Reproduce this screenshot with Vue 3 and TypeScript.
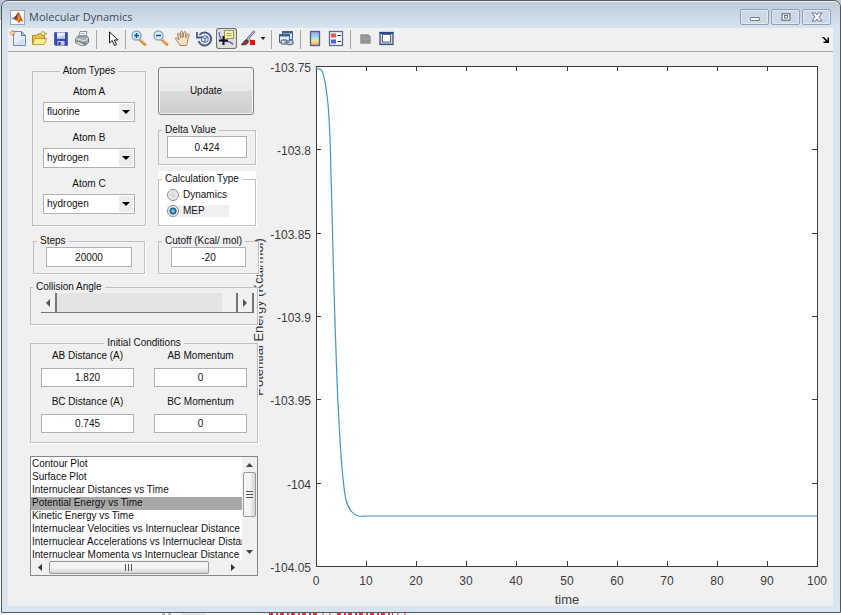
<script setup lang="ts">
import { computed, ref } from 'vue'

interface AtomField {
  id: string
  label: string
  value: string
}

interface ConditionField {
  id: string
  label: string
  value: string
}

const elements = ['hydrogen', 'fluorine', 'chlorine', 'deuterium']

const atoms = ref<AtomField[]>([
  { id: 'atom-a', label: 'Atom A', value: 'fluorine' },
  { id: 'atom-b', label: 'Atom B', value: 'hydrogen' },
  { id: 'atom-c', label: 'Atom C', value: 'hydrogen' },
])

const conditions = ref<ConditionField[]>([
  { id: 'ab-distance', label: 'AB Distance (A)', value: '1.820' },
  { id: 'ab-momentum', label: 'AB Momentum', value: '0' },
  { id: 'bc-distance', label: 'BC Distance (A)', value: '0.745' },
  { id: 'bc-momentum', label: 'BC Momentum', value: '0' },
])

const delta = ref('0.424')
const steps = ref('20000')
const cutoff = ref('-20')
const calcType = ref('MEP')
const angle = ref(180)

const plots = [
  'Contour Plot',
  'Surface Plot',
  'Internuclear Distances vs Time',
  'Potential Energy vs Time',
  'Kinetic Energy vs Time',
  'Internuclear Velocities vs Internuclear Distance',
  'Internuclear Accelerations vs Internuclear Distance',
  'Internuclear Momenta vs Internuclear Distance',
]
const selectedPlot = ref('Potential Energy vs Time')

// Plot box in chart units
const box = { left: 316, top: 66, right: 817, bottom: 566 }

const xTicks = Array.from({ length: 11 }, (_, i) => ({
  label: String(i * 10),
  x: Math.round(box.left + ((box.right - box.left) * i) / 10),
}))

const yTicks = ['-103.75', '-103.8', '-103.85', '-103.9', '-103.95', '-104', '-104.05'].map((label, i) => ({
  label,
  y: Math.round(box.top + ((box.bottom - box.top) * i) / 6),
}))

const samples: [number, number][] = [
  [316, 69], [319, 69], [322, 71], [325, 82], [328, 104], [330, 138], [331, 175], [332, 210],
  [334, 290], [337, 380], [339, 422], [342, 468], [346, 500], [352, 512], [358, 516], [366, 516],
]

// Catmull-Rom interpolation through the samples
const curve = computed(() => {
  let d = `M${samples[0][0]} ${samples[0][1]}`
  for (let i = 0; i < samples.length - 1; i++) {
    const p0 = samples[Math.max(i - 1, 0)]
    const p1 = samples[i]
    const p2 = samples[i + 1]
    const p3 = samples[Math.min(i + 2, samples.length - 1)]
    d += ` C${p1[0] + (p2[0] - p0[0]) / 6} ${p1[1] + (p2[1] - p0[1]) / 6}`
    d += ` ${p2[0] - (p3[0] - p1[0]) / 6} ${p2[1] - (p3[1] - p1[1]) / 6} ${p2[0]} ${p2[1]}`
  }
  return `${d} L${box.right} 516`
})

function nudge(amount: number) {
  angle.value = Math.min(180, Math.max(0, Number(angle.value) + amount))
}
</script>

<template>
  <div class="desktop">
    <div class="window">
      <header class="titlebar">
        <svg class="app-icon" width="15" height="15" viewBox="0 0 15 15" aria-hidden="true">
          <rect x=".5" y=".5" width="14" height="14" fill="#f4f6f8" stroke="#98a5b3" />
          <path d="M1.5 8.5 5 6.500 7 8 5 10z" fill="#4c86b8" />
          <path d="M5 6.500C6.500 5.500 7.500 2 8.500 2L7 9.500 5 10z" fill="#7c3026" />
          <path d="M8.500 2C10 3 11.500 9 13.500 11.500 11.500 10.500 10.500 10.500 8.500 13 8 11 6.500 10 5 10 7 9 7.500 4 8.500 2z" fill="#d9581c" />
          <path d="M8.700 4C9.500 6 9.800 8 9.500 10.500L8 11z" fill="#f5a23c" />
        </svg>
        <h1>Molecular Dynamics</h1>
        <div class="window-buttons">
          <button type="button" aria-label="Minimize">
            <svg width="14" height="12" viewBox="0 0 14 12"><rect x="2.500" y="6.500" width="9" height="3" rx=".5" fill="#fff" stroke="#737c87" /></svg>
          </button>
          <button type="button" aria-label="Maximize">
            <svg width="14" height="12" viewBox="0 0 14 12"><rect x="3" y="2.500" width="8" height="7" fill="#fff" stroke="#737c87" /><rect x="3.500" y="3" width="7" height="6" fill="none" stroke="#8c959f" /><rect x="5.500" y="4.500" width="3" height="2.500" fill="#fff" stroke="#69727d" /></svg>
          </button>
          <button type="button" aria-label="Close">
            <svg width="14" height="12" viewBox="0 0 14 12"><path d="M2 2h3.500L7 4 8.500 2H12L8.900 6 12 10H8.500L7 8 5.500 10H2l3.100-4z" fill="#fff" stroke="#6b747f" /></svg>
          </button>
        </div>
      </header>

      <div class="client">
        <div class="toolbar" role="toolbar" aria-label="Figure tools">
          <div class="group">
            <button type="button" aria-label="New figure">
              <svg viewBox="0 0 21 21"><path d="M5.500 3.500h8l4 4v10h-12z" fill="#e6f0fb" stroke="#7187b0" /><path d="M13.500 3.500v4h4z" fill="#b5cbe8" stroke="#6079a8" /><path d="M7 16.500 16.500 9v7.500z" fill="#cfe1f5" /><path d="M4.500 2v6M1.500 5h6M2.500 3l4 4M6.500 3l-4 4" stroke="#e07a4a" /><circle cx="4.500" cy="5" r="1.300" fill="#ffe6b0" /></svg>
            </button>
            <button type="button" aria-label="Open">
              <svg viewBox="0 0 21 21"><path d="M3.500 16.500v-9h4l1-1.500h4l1 1.500h2v3" fill="#e9c24d" stroke="#b58a26" /><path d="M3.500 16.500l2.500-6h11.500l-2.500 6z" fill="#fff09a" stroke="#c79c30" /><path d="M11 5.500C13 3 16 3 16.500 6M15 5l1.500 2 1.500-2" fill="none" stroke="#d5a732" /></svg>
            </button>
            <button type="button" aria-label="Save">
              <svg viewBox="0 0 21 21"><path d="M4.500 4.500h13v13h-12l-1-1z" fill="#3c49b0" stroke="#5964b5" /><path d="M7 4.500h8v6H7z" fill="#edf1fc" /><path d="M7 9l8-2v3.500H7z" fill="#bccdf2" /><path d="M7.500 13h7v4.500h-7z" fill="#c5cada" /><path d="M8.500 14h2v3h-2z" fill="#27307b" /></svg>
            </button>
            <button type="button" aria-label="Print">
              <svg viewBox="0 0 21 21"><path d="M7.500 9 9 3.500h7L14.500 9" fill="#f2f6fa" stroke="#8993a0" /><path d="M9.500 5.500h4.500M9 7.500h4.500" stroke="#a8b5c4" /><path d="M4.500 10.500 7.500 8h8l2 1.500v5L14 17.500 4.500 14z" fill="#a7adb2" stroke="#6e757b" /><path d="M4.500 10.500 14 13l3.500-3.500" fill="none" stroke="#e0e3e5" /><path d="M6 13l7 2.500M14 13.500v3" stroke="#555c62" /><path d="M4 14.500l3-1 6 2.500-2 2z" fill="#e6e8ea" stroke="#82898f" /></svg>
            </button>
          </div>
          <i class="sep"></i>
          <button type="button" aria-label="Edit plot">
            <svg viewBox="0 0 21 21"><path d="M8.500 4v11l2.700-2.500L13.500 17.500l2-1-2.200-4.500H17z" fill="#fff" stroke="#161616" stroke-linejoin="round" /></svg>
          </button>
          <i class="sep tight"></i>
          <div class="group spaced">
            <button type="button" aria-label="Zoom in">
              <svg viewBox="0 0 21 21"><path d="M11.500 11.500l5.500 5" stroke="#d49344" stroke-width="3" stroke-linecap="round" /><path d="M12 11l5 4.500" stroke="#f6c574" /><circle cx="8.500" cy="7.500" r="4.500" fill="#d4efff" stroke="#8babc9" stroke-width="1.500" /><path d="M6 7.500h5M8.500 5v5" stroke="#27518d" stroke-width="1.600" /></svg>
            </button>
            <button type="button" aria-label="Zoom out">
              <svg viewBox="0 0 21 21"><path d="M11.500 11.500l5.500 5" stroke="#d49344" stroke-width="3" stroke-linecap="round" /><path d="M12 11l5 4.500" stroke="#f6c574" /><circle cx="8.500" cy="7.500" r="4.500" fill="#d4efff" stroke="#8babc9" stroke-width="1.500" /><path d="M6 7.500h5" stroke="#27518d" stroke-width="1.600" /></svg>
            </button>
            <button type="button" aria-label="Pan">
              <svg viewBox="0 0 21 21"><path d="M8 17.500C7 14.500 3.500 12 3.500 10c1-1 2.500.5 3.500 2L5.500 6c.5-1.500 1.700-.8 2 .3L9 10 8.500 4c.7-1.300 1.900-1 2 .3L11 9.500l1-5.300c.8-1.200 2-.6 2 .6l-.5 5.200 1.700-3.700c.9-.9 2-.2 1.800 1L15.500 13c0 2-.7 3-1 4.500z" fill="#fbe0c3" stroke="#99755e" stroke-width=".9" /></svg>
            </button>
            <button type="button" aria-label="Rotate 3D">
              <svg viewBox="0 0 21 21"><path d="M5.500 7A6.500 6.500 0 1 1 4.500 13" fill="none" stroke="#4c5f86" stroke-width="2" /><path d="M3 4v5.500h5.500" fill="none" stroke="#4c5f86" stroke-width="1.800" /><path d="M7.500 9 11 7.500 14 9v4l-3 1.500L7.500 13z" fill="#dce6f5" stroke="#526894" /><path d="M7.500 9l3.500 1.500L14 9M11 10.500v4" fill="none" stroke="#526894" /></svg>
            </button>
            <button type="button" class="pressed" aria-label="Data cursor" aria-pressed="true">
              <svg viewBox="0 0 21 21"><path d="M3 4c.5 5 2 8 5 9s7 0 9 3.500" fill="none" stroke="#6762da" stroke-width="1.400" /><path d="M8.500 2.500h9v8h-7l-2 2z" fill="#f5efa4" stroke="#9b935f" /><path d="M10.500 5.500h5M10.500 7.500h5" stroke="#a6a171" /><path d="M3 12.500h9M7.500 8v9" stroke="#111" stroke-width="2" /></svg>
            </button>
            <button type="button" aria-label="Brush">
              <svg viewBox="0 0 21 21"><path d="M16.500 3 9.500 11" stroke="#6866ae" stroke-width="2.600" /><path d="M16.500 3 10 10" stroke="#d1d3ec" /><path d="M10.500 9.500l2 2-2 2-2.500-2z" fill="#b9b9b9" stroke="#777" stroke-width=".6" /><path d="M9 11.500C6 11.500 6 15 3 16.500c3 1.200 7 0 7.500-3z" fill="#813a38" stroke="#472224" stroke-width=".7" /><path d="M12 12h5v5h-5z" fill="#f00c0c" /></svg>
            </button>
          </div>
          <button type="button" class="caret" aria-label="Brush colors">
            <svg viewBox="0 0 8 21"><path d="M1.500 9h5L4 12z" fill="#222" /></svg>
          </button>
          <i class="sep"></i>
          <button type="button" aria-label="Link plot">
            <svg viewBox="0 0 21 21"><path d="M6.500 3.500h10v8h-10z" fill="#dce8f8" stroke="#415c91" /><path d="M6 4.500h11" stroke="#415c91" stroke-width="2" /><path d="M3.500 6.500h10v8h-10z" fill="#e7effa" stroke="#415c91" /><path d="M3 7.500h11" stroke="#415c91" stroke-width="2" /><g fill="none" stroke="#6f8195" stroke-width="1.500"><rect x="5" y="12" width="6.500" height="4" rx="2" fill="#d9e3ec" /><rect x="10.500" y="12.500" width="6.500" height="4" rx="2" fill="#d9e3ec" /><path d="M8.500 14.300h5" /></g></svg>
          </button>
          <i class="sep tight"></i>
          <div class="group inset">
            <button type="button" aria-label="Insert colorbar">
              <svg viewBox="0 0 21 21"><defs><linearGradient id="jet" x1="0" y1="0" x2="0" y2="1"><stop offset="0" stop-color="#a69bea" /><stop offset=".35" stop-color="#8edbf0" /><stop offset=".65" stop-color="#e9ed8f" /><stop offset="1" stop-color="#f2a06b" /></linearGradient></defs><rect x="6.500" y="3.500" width="9" height="14" fill="url(#jet)" stroke="#4d6189" stroke-width="1.300" /></svg>
            </button>
            <button type="button" aria-label="Insert legend">
              <svg viewBox="0 0 21 21"><rect x="4.500" y="3.500" width="13" height="14" fill="#f5f8fc" stroke="#566a93" stroke-width="1.300" /><path d="M6 5.500h5v4H6z" fill="#ea5450" /><path d="M6 11.500h5v4H6z" fill="#5559e8" /><path d="M12.500 7.500H16M12.500 13.500H16" stroke="#333" /></svg>
            </button>
          </div>
          <i class="sep"></i>
          <div class="group">
            <button type="button" aria-label="Hide plot tools">
              <svg viewBox="0 0 21 21"><path d="M5.500 6.500h8l2 2v7h-10z" fill="#929292" stroke="#aaa" /><path d="M7 9h7M7 11.500h7" stroke="#a3a3a3" /></svg>
            </button>
            <button type="button" aria-label="Show plot tools">
              <svg viewBox="0 0 21 21"><rect x="4" y="4.500" width="13" height="12" fill="#d5d2c7" stroke="#39538b" stroke-width="1.300" /><path d="M3.500 5h14" stroke="#2d4986" stroke-width="2" /><rect x="6.500" y="6.500" width="8" height="7.500" fill="#fff" stroke="#526895" /><path d="M5 15.500h11" stroke="#989fa7" /></svg>
            </button>
          </div>
          <button type="button" class="dock" aria-label="Dock figure">
            <svg viewBox="0 0 14 21"><path d="M3 9h2l3.500 3.500V9.500H10V15H4.500v-1.500h2.500z" fill="#000" /></svg>
          </button>
        </div>

        <main class="figure">
          <form class="controls" @submit.prevent>
            <div class="settings">
              <fieldset class="atoms">
                <legend class="centered">Atom Types</legend>
                <div v-for="atom in atoms" :key="atom.id" class="atom">
                  <label :for="atom.id">{{ atom.label }}</label>
                  <span class="popup">
                    <select :id="atom.id" v-model="atom.value">
                      <option v-for="e in elements" :key="e">{{ e }}</option>
                    </select>
                    <svg width="14" height="16" viewBox="0 0 14 16" aria-hidden="true"><path d="M3 6h8l-4 4z" fill="#000" /></svg>
                  </span>
                </div>
              </fieldset>

              <div class="side">
                <button type="submit" class="update">Update</button>
                <fieldset class="single">
                  <legend><label for="delta">Delta Value</label></legend>
                  <input id="delta" v-model="delta" type="text" />
                </fieldset>
                <div class="calc">
                  <fieldset>
                    <legend>Calculation Type</legend>
                    <label class="radio"><input v-model="calcType" type="radio" name="calc" value="Dynamics" /><span>Dynamics</span></label>
                    <label class="radio shaded"><input v-model="calcType" type="radio" name="calc" value="MEP" /><span>MEP</span></label>
                  </fieldset>
                </div>
              </div>
            </div>

            <div class="pair">
              <fieldset class="single">
                <legend><label for="steps">Steps</label></legend>
                <input id="steps" v-model="steps" type="text" />
              </fieldset>
              <fieldset class="single">
                <legend><label for="cutoff">Cutoff (Kcal/ mol)</label></legend>
                <input id="cutoff" v-model="cutoff" type="text" />
              </fieldset>
            </div>

            <fieldset class="collision">
              <legend><label for="angle">Collision Angle</label></legend>
              <div class="slider">
                <button type="button" aria-label="Decrease angle" @click="nudge(-1)">
                  <svg width="6" height="8" viewBox="0 0 6 8"><path d="M5 0v8L1 4z" fill="#555" /></svg>
                </button>
                <input id="angle" v-model="angle" type="range" min="0" max="180" />
                <button type="button" aria-label="Increase angle" @click="nudge(1)">
                  <svg width="6" height="8" viewBox="0 0 6 8"><path d="M1 0v8l4-4z" fill="#555" /></svg>
                </button>
              </div>
            </fieldset>

            <fieldset class="initial">
              <legend class="centered">Initial Conditions</legend>
              <div class="conditions">
                <div v-for="c in conditions" :key="c.id" class="condition">
                  <label :for="c.id">{{ c.label }}</label>
                  <input :id="c.id" v-model="c.value" type="text" />
                </div>
              </div>
            </fieldset>

            <div class="listbox">
              <select v-model="selectedPlot" size="8" aria-label="Plot type">
                <option v-for="p in plots" :key="p">{{ p }}</option>
              </select>
              <div class="bar vertical" aria-hidden="true">
                <svg width="7" height="4" viewBox="0 0 7 4"><path d="M0 4h7L3.500 0z" fill="#444" /></svg>
                <i class="thumb"><b></b></i>
                <svg width="7" height="4" viewBox="0 0 7 4"><path d="M0 0h7L3.500 4z" fill="#444" /></svg>
              </div>
              <div class="bar horizontal" aria-hidden="true">
                <svg width="4" height="7" viewBox="0 0 4 7"><path d="M4 0v7L0 3.500z" fill="#333" /></svg>
                <i class="thumb"><b></b></i>
                <svg width="4" height="7" viewBox="0 0 4 7"><path d="M0 0v7l4-3.500z" fill="#333" /></svg>
              </div>
            </div>
          </form>

          <svg class="chart" viewBox="258 52 575 554" role="img" aria-label="Potential energy against time">
            <rect :x="box.left + 0.5" :y="box.top + 0.5" :width="box.right - box.left" :height="box.bottom - box.top" fill="#fff" stroke="#3c3c3c" />
            <g v-for="t in xTicks" :key="t.label">
              <path :d="`M${t.x + 0.5} ${box.bottom}v-5M${t.x + 0.5} ${box.top}v5`" stroke="#3c3c3c" />
              <text :x="t.x" y="585" text-anchor="middle">{{ t.label }}</text>
            </g>
            <g v-for="t in yTicks" :key="t.label">
              <path :d="`M${box.left} ${t.y + 0.5}h5M${box.right} ${t.y + 0.5}h-5`" stroke="#3c3c3c" />
              <text x="311" :y="t.y + 6" text-anchor="end">{{ t.label }}</text>
            </g>
            <path :d="curve" fill="none" stroke="#3f94d0" stroke-width="1.200" />
            <text class="axis-title" x="567" y="604" text-anchor="middle">time</text>
            <text class="axis-title" transform="translate(263 317) rotate(-90)" text-anchor="middle">Potential Energy (Kcal/mol)</text>
          </svg>
        </main>
      </div>
    </div>
    <svg class="behind" width="420" height="2" viewBox="0 0 420 2" aria-hidden="true">
      <path d="M268 1h50M336 1h56" stroke="#e33" stroke-width="2" stroke-dasharray="4 3 2 2" />
      <path d="M322 0v2M329 0v2M397 0v2M404 0v2" stroke="#e33" />
      <path d="M161 1h3M167 1h3" stroke="#888" />
      <path d="M180 0h24v2h-24z" fill="#e6e6e6" />
    </svg>
  </div>
</template>

<style>
body {
  margin: 0;
  background: #fafafa;
}
</style>

<style scoped>
* {
  box-sizing: border-box;
}

.desktop {
  padding-left: 1px;
  overflow: hidden;
  font: 10px/12px "Liberation Sans", Arial, sans-serif;
  color: #111;
  background: linear-gradient(#b9c6d3 0 20px, #fafafa 20px);
}

.behind {
  display: block;
}

.window {
  padding: 0 7px 6px 6px;
  border: 1px solid #55575c;
  border-radius: 7px 7px 0 0;
  background: linear-gradient(#bdcbd9, #d8e5f1 28px);
  box-shadow: inset 0 1px 0 #eef4f9;
}

.titlebar {
  display: flex;
  align-items: center;
  height: 27px;
  padding: 5px 2px 0;
}

.app-icon {
  margin-right: 4px;
}

h1 {
  flex: 1;
  margin: 0;
  font: 11px/16px "Open Sans", "Noto Sans", sans-serif;
  color: #3f4c5a;
}

.window-buttons {
  display: flex;
  gap: 2px;
}

.window-buttons button {
  display: grid;
  place-items: center;
  width: 29px;
  height: 16px;
  padding: 0;
  border: 1px solid #929fae;
  border-radius: 2px;
  background: #ccd9e6;
  box-shadow: inset 0 0 0 1px #e0e9f2;
}

.client {
  background: #f0f0f0;
}

.toolbar {
  display: flex;
  align-items: flex-start;
  height: 24px;
  border-bottom: 1px solid #a8a8a8;
}

.group {
  display: flex;
}

.spaced {
  gap: 1px;
}

.inset {
  padding-left: 1px;
}

.toolbar button {
  width: 21px;
  height: 21px;
  padding: 0;
  border: 0;
  background: none;
}

.toolbar svg {
  display: block;
  width: 100%;
  height: 21px;
}

.toolbar .pressed {
  border-radius: 3px;
  background: #dedede;
  box-shadow: inset 0 0 0 1px #707070;
}

.toolbar .caret {
  width: 8px;
}

.toolbar .dock {
  width: 14px;
  margin-left: auto;
}

.sep {
  width: 1px;
  height: 19px;
  margin: 2px 4px 0;
  background: #a6a6a6;
}

.sep.tight {
  margin: 2px 2px 0 3px;
}

.figure {
  display: flex;
  align-items: flex-start;
}

.controls {
  position: relative;
  z-index: 1;
  flex: none;
  width: 250px;
  padding: 13px 0 0 22px;
}

.settings {
  display: grid;
  grid-template-columns: 114px 98px;
  gap: 12px;
  padding-left: 2px;
}

fieldset {
  min-width: 0;
  margin: 0;
  padding: 0 8px 6px;
  border: 1px solid #c0c0c0;
  background: #f0f0f0;
  box-shadow: 1px 1px 0 #fff;
}

legend {
  margin-left: -5px;
  padding: 0 3px;
  background: #f0f0f0;
  white-space: nowrap;
}

legend.centered {
  margin: 0 auto;
}

.atoms {
  padding: 9px 10px 8px;
}

.atom {
  display: flex;
  flex-direction: column;
  align-items: center;
  gap: 4px;
}

.atom + .atom {
  margin-top: 10px;
}

.popup {
  display: grid;
  grid-template-columns: 1fr 16px;
  width: 92px;
}

.popup select {
  grid-area: 1 / 1 / 2 / 3;
  height: 20px;
  padding: 0 3px;
  border: 1px solid #adb0b6;
  border-radius: 0;
  appearance: none;
  background: #fff;
  color: inherit;
  font: inherit;
}

.popup svg {
  grid-area: 1 / 2;
  align-self: center;
  background: #ececec;
  pointer-events: none;
}

.side {
  display: flex;
  flex-direction: column;
  padding-top: 2px;
}

.update {
  height: 48px;
  margin: 0 2px 9px 0;
  border: 1px solid #808080;
  border-radius: 3px;
  background: linear-gradient(#f1f1f1, #e9e9e9 50%, #dadada 50%, #cecece);
  box-shadow: inset 0 0 0 1px #f6f6f6;
  color: inherit;
  font: inherit;
}

input[type="text"] {
  display: block;
  width: 100%;
  height: 20px;
  padding: 0;
  border: 1px solid #adb0b6;
  background: #fff;
  color: inherit;
  font: inherit;
  text-align: center;
}

.side .single input {
  height: 22px;
}

.calc {
  margin-top: 6px;
  padding-top: 2px;
  background: #fff;
}

.calc fieldset {
  padding-bottom: 4px;
  background: #fff;
}

.calc legend {
  background: #fff;
}

.radio {
  display: flex;
  align-items: center;
  gap: 4px;
  height: 12px;
  margin: 4px 0;
}

.radio.shaded {
  width: 62px;
  background: #f0f0f0;
}

.radio input {
  width: 12px;
  height: 12px;
  margin: 0;
  border: 1px solid #8e8f8f;
  border-radius: 50%;
  appearance: none;
  background: radial-gradient(#d5d5d5, #f4f4f4);
}

.radio input:checked {
  background: radial-gradient(circle, #5cc4ee 0 1px, #14507f 3px, #e6edf2 4px);
}

.pair {
  display: grid;
  grid-template-columns: 112px 101px;
  gap: 13px;
  margin-top: 9px;
  padding-left: 3px;
}

.pair .single {
  padding: 0 12px 6px;
}

.pair legend {
  margin-left: -9px;
}

.collision {
  margin-top: 7px;
  padding: 0 3px 11px 10px;
}

.collision legend {
  margin-left: -8px;
}

.slider {
  display: flex;
  height: 20px;
  border-bottom: 1px solid #767676;
}

.slider button {
  display: grid;
  place-items: center;
  width: 16px;
  padding: 0;
  border: 0;
  border-right: 2px solid #767676;
  background: #f0f0f0;
}

.slider input {
  flex: 1;
  min-width: 0;
  margin: 0;
  appearance: none;
  background: #e4e4e4;
}

.slider input::-webkit-slider-thumb {
  width: 16px;
  height: 19px;
  border: 0;
  border-right: 2px solid #767676;
  appearance: none;
  background: #f0f0f0;
}

.initial {
  margin-top: 12px;
  padding: 1px 10px 9px;
}

.conditions {
  display: grid;
  grid-template-columns: 93px 93px;
  justify-content: space-between;
  gap: 9px;
}

.condition {
  display: grid;
  gap: 6px;
  text-align: center;
}

.condition input[type="text"] {
  height: 19px;
}

.listbox {
  display: grid;
  grid-template-columns: 1fr 15px;
  grid-template-rows: 103px 15px;
  margin-top: 13px;
  border: 1px solid #828790;
  background: #f0f0f0;
}

.listbox select {
  min-width: 0;
  height: 103px;
  padding: 1px 0;
  overflow: hidden;
  border: 0;
  border-radius: 0;
  outline: 0;
  background: #fff;
  color: inherit;
  font: inherit;
  scrollbar-width: none;
}

.listbox option {
  min-height: 13px;
  height: 13px;
  padding: 0 1px;
  line-height: 13px;
  color: #111;
}

.listbox option:checked {
  background: #a8a8a8 linear-gradient(#a8a8a8, #a8a8a8);
  color: #111;
}

.bar {
  display: flex;
  align-items: center;
  justify-content: space-between;
}

.vertical {
  flex-direction: column;
  padding: 6px 0;
}

.horizontal {
  padding: 0 7px;
}

.thumb {
  display: grid;
  place-items: center;
  border: 1px solid #999;
  border-radius: 2px;
}

.vertical .thumb {
  width: 13px;
  height: 45px;
  margin-bottom: 28px;
  background: linear-gradient(90deg, #f5f5f5 50%, #d5d5d5);
}

.horizontal .thumb {
  width: 160px;
  height: 13px;
  margin-right: 16px;
  background: linear-gradient(#f5f5f5 50%, #d5d5d5);
}

.thumb b {
  width: 7px;
  height: 7px;
}

.vertical b {
  background: repeating-linear-gradient(#555 0 1px, transparent 1px 3px);
}

.horizontal b {
  background: repeating-linear-gradient(90deg, #555 0 1px, transparent 1px 3px);
}

.chart {
  flex: 1;
  min-width: 0;
  overflow: visible;
  font: 12px "Liberation Sans", Arial, sans-serif;
}

.chart text {
  fill: #3c3c3c;
}

.chart .axis-title {
  font-size: 13px;
}
</style>
